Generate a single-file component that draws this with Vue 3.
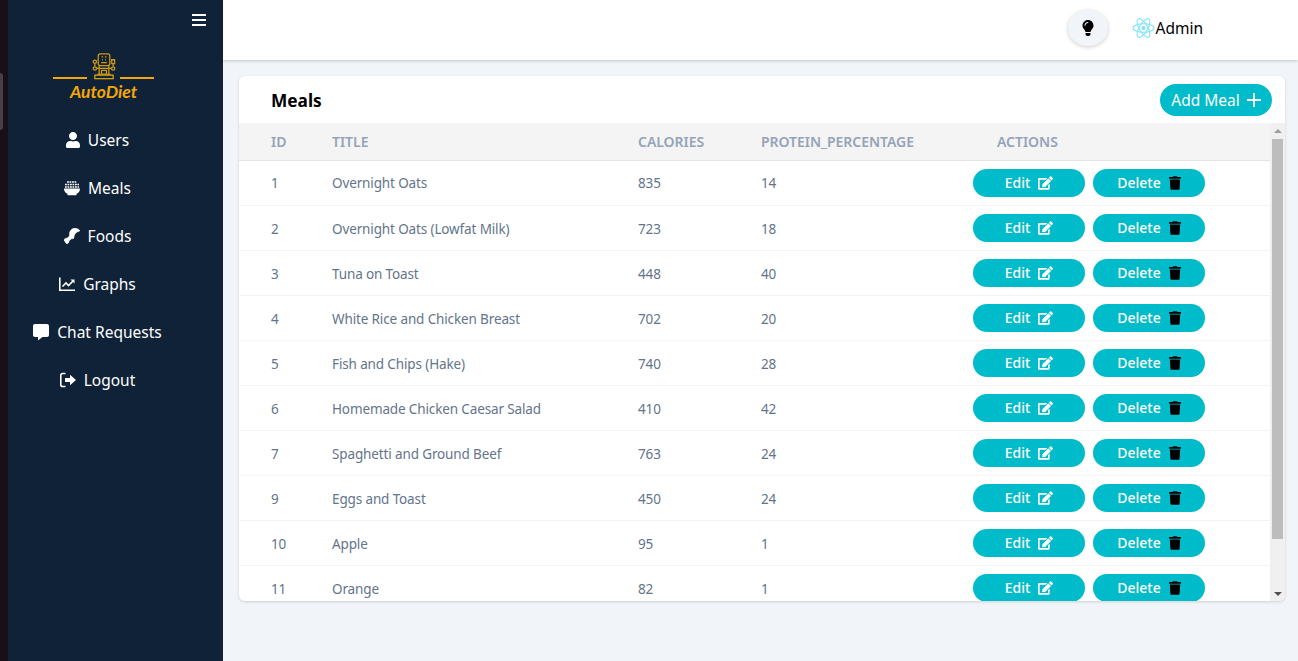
<script setup>
const nav = [
  { label: 'Users', icon: 'user' },
  { label: 'Meals', icon: 'bowl' },
  { label: 'Foods', icon: 'drum' },
  { label: 'Graphs', icon: 'chart' },
  { label: 'Chat Requests', icon: 'chat' },
  { label: 'Logout', icon: 'out' },
]
const meals = [
  [1, 'Overnight Oats', 835, 14],
  [2, 'Overnight Oats (Lowfat Milk)', 723, 18],
  [3, 'Tuna on Toast', 448, 40],
  [4, 'White Rice and Chicken Breast', 702, 20],
  [5, 'Fish and Chips (Hake)', 740, 28],
  [6, 'Homemade Chicken Caesar Salad', 410, 42],
  [7, 'Spaghetti and Ground Beef', 763, 24],
  [9, 'Eggs and Toast', 450, 24],
  [10, 'Apple', 95, 1],
  [11, 'Orange', 82, 1],
]
</script>

<template>
  <div class="page">
    <div class="edge"><div class="edge-handle"></div></div>
    <aside class="sidebar">
      <div class="burger-row">
        <button class="burger" aria-label="Menu"><span></span><span></span><span></span></button>
      </div>
      <div class="logo">
        <div class="logo-mark">
          <i class="logo-line"></i>
          <svg class="robot" viewBox="0 0 26 28" fill="none" stroke="#d09a10" stroke-width="1.300">
            <rect x="7" y="1" width="12" height="12" rx="2" />
            <path d="M10.500 4h1.500M14 4h1.500M11 7h.8M14.200 7h.8M10 10h6" stroke-width="1.500" />
            <path d="M8 13v9M18 13v9M8 16h10M10.500 22v-4h5v4" />
            <circle cx="3.500" cy="9" r="1.700" /><circle cx="3.500" cy="16" r="1.700" />
            <circle cx="22.500" cy="16" r="1.700" />
            <path d="M21 7h3v4h-3zM3.500 11v3M22.500 11v3M5 16h3M18 16h3" />
            <rect x="3.500" y="23" width="19" height="3.600" stroke-width="1.400" />
            <path d="M6 22h14" />
          </svg>
          <i class="logo-line"></i>
        </div>
        <div class="logo-text">AutoDiet</div>
      </div>
      <nav class="nav">
        <a v-for="item in nav" :key="item.label" class="nav-item">
          <svg v-if="item.icon === 'user'" class="ni" viewBox="0 0 448 512" fill="currentColor"><path d="M224 256c70.700 0 128-57.300 128-128S294.700 0 224 0 96 57.300 96 128s57.300 128 128 128zm89.600 32h-16.700c-22.200 10.200-46.900 16-72.900 16s-50.600-5.800-72.900-16h-16.700C60.200 288 0 348.200 0 422.400V464c0 26.500 21.500 48 48 48h352c26.500 0 48-21.500 48-48v-41.600c0-74.200-60.200-134.400-134.400-134.400z"/></svg>
          <svg v-else-if="item.icon === 'bowl'" class="ni wide" viewBox="0 0 16 16" fill="currentColor"><path d="M0 8.500h16c0 3-1.600 4.600-3.400 5.200v.6c0 .6-.4 1-1 1H4.400c-.6 0-1-.4-1-1v-.6C1.600 13.100 0 11.500 0 8.500z"/><path d="M3 2h10M1 4.500h14M1 7h14" fill="none" stroke="currentColor" stroke-width="1.400" stroke-dasharray="1.800 .7"/></svg>
          <svg v-else-if="item.icon === 'drum'" class="ni wide" viewBox="0 0 16 16" fill="currentColor" stroke="currentColor" stroke-width=".7" stroke-linejoin="round"><path d="M15.800 2.800C15 1 12 0 9.500.5 7 1 5.500 3.500 5.500 6.500V8L3.500 10c-.7.6-1.500.2-2.300.6C0 11.200-.2 13 1.200 13.600c0 1.400 1.800 2.900 3.100 1.400.7-.8.2-1.600.9-2.200l2-2 2.300-.3c.7-2 .6-4 2.200-5.500C12.800 3.900 14.500 3.300 15.800 2.800z"/></svg>
          <svg v-else-if="item.icon === 'chart'" class="ni wide" viewBox="0 0 16 16" fill="none" stroke="currentColor" stroke-width="1.600"><path d="M.8 1.500v12.700H16"/><path d="M3.500 10.500l3.500-3.500 2.500 2.500 4.500-4.500"/><path d="M11.500 3.500h4v4z" fill="currentColor" stroke="none"/></svg>
          <svg v-else-if="item.icon === 'chat'" class="ni wide" viewBox="0 0 512 512" fill="currentColor"><path d="M448 0H64C28.700 0 0 28.700 0 64v288c0 35.300 28.700 64 64 64h96v84c0 9.800 11.200 15.500 19.100 9.700L304 416h144c35.300 0 64-28.700 64-64V64c0-35.300-28.700-64-64-64z"/></svg>
          <svg v-else class="ni wide" viewBox="0 0 16 16" fill="currentColor"><path d="M5.500 1.500H2.600C1.600 1.500.8 2.300.8 3.300v9.400c0 1 .8 1.800 1.800 1.800h2.900" fill="none" stroke="currentColor" stroke-width="1.600"/><path d="M5 6h5V2.800L16 8l-6 5.200V10H5z"/></svg>
          <span>{{ item.label }}</span>
        </a>
      </nav>
    </aside>

    <div class="content">
      <header class="topbar">
        <button class="bulb" aria-label="Theme">
          <svg viewBox="0 0 352 512" fill="#000"><path d="M96.060 454.350c.01 6.290 1.870 12.450 5.360 17.690l17.090 25.690a31.990 31.990 0 0 0 26.640 14.280h61.710a31.990 31.990 0 0 0 26.640-14.280l17.090-25.690a31.989 31.989 0 0 0 5.360-17.690l.04-38.350H96.010l.05 38.350zM0 176c0 44.370 16.450 84.850 43.560 115.780 16.520 18.850 42.360 58.230 52.210 91.450.04.26.07.52.11.78h160.240c.04-.26.07-.51.11-.78 9.850-33.220 35.690-72.600 52.210-91.450C335.550 260.850 352 220.370 352 176 352 78.610 272.910-.3 175.450 0 73.440.31 0 82.970 0 176zm176-80c-44.110 0-80 35.890-80 80 0 8.840-7.160 16-16 16s-16-7.160-16-16c0-61.760 50.240-112 112-112 8.840 0 16 7.160 16 16s-7.160 16-16 16z"/></svg>
        </button>
        <div class="admin">
          <svg class="react" viewBox="0 0 24 22" fill="none" stroke="#61dafb" stroke-width="1.100">
            <circle cx="12" cy="11" r="2" fill="#61dafb" stroke="none" />
            <ellipse cx="12" cy="11" rx="11" ry="4.400" />
            <ellipse cx="12" cy="11" rx="11" ry="4.400" transform="rotate(60 12 11)" />
            <ellipse cx="12" cy="11" rx="11" ry="4.400" transform="rotate(120 12 11)" />
          </svg>
          <span>Admin</span>
        </div>
      </header>

      <main class="main">
        <section class="card">
          <div class="card-head">
            <h1>Meals</h1>
            <button class="add">Add Meal
              <svg viewBox="0 0 14 14" stroke="#fff" stroke-width="1.800"><path d="M7 0v14M0 7h14"/></svg>
            </button>
          </div>
          <div class="table-wrap">
            <div class="table-clip">
              <table>
                <colgroup><col class="c1"><col class="c2"><col class="c3"><col class="c4"><col></colgroup>
                <thead>
                  <tr><th>ID</th><th>TITLE</th><th>CALORIES</th><th>PROTEIN_PERCENTAGE</th><th>ACTIONS</th></tr>
                </thead>
                <tbody>
                  <tr v-for="m in meals" :key="m[0]">
                    <td>{{ m[0] }}</td><td>{{ m[1] }}</td><td>{{ m[2] }}</td><td>{{ m[3] }}</td>
                    <td class="actions">
                      <div class="btns">
                        <button class="pill">Edit
                          <svg class="pi-edit" viewBox="0 0 576 512" fill="#fff"><path d="M402.600 83.200l90.200 90.200c3.800 3.800 3.800 10 0 13.800L274.400 405.600l-92.800 10.300c-12.400 1.400-22.900-9.100-21.500-21.500l10.300-92.800L388.800 83.200c3.800-3.800 10-3.800 13.800 0zm162-22.900l-48.800-48.800c-15.200-15.200-39.900-15.200-55.200 0l-35.400 35.400c-3.800 3.800-3.800 10 0 13.800l90.200 90.200c3.800 3.800 10 3.800 13.800 0l35.400-35.400c15.200-15.300 15.200-40 0-55.200zM384 346.200V448H64V128h229.800c3.200 0 6.200-1.300 8.500-3.500l40-40c7.600-7.600 2.200-20.500-8.500-20.500H48C21.500 64 0 85.500 0 112v352c0 26.500 21.500 48 48 48h352c26.500 0 48-21.500 48-48V306.200c0-10.700-12.900-16-20.500-8.500l-40 40c-2.200 2.300-3.500 5.300-3.500 8.500z"/></svg>
                        </button>
                        <button class="pill">Delete
                          <svg class="pi-trash" viewBox="0 0 448 512" fill="#000"><path d="M432 32H312l-9.400-18.700A24 24 0 0 0 281.100 0H166.800a23.720 23.720 0 0 0-21.400 13.300L136 32H16A16 16 0 0 0 0 48v32a16 16 0 0 0 16 16h416a16 16 0 0 0 16-16V48a16 16 0 0 0-16-16zM53.200 467a48 48 0 0 0 47.900 45h245.800a48 48 0 0 0 47.900-45L416 128H32z"/></svg>
                        </button>
                      </div>
                    </td>
                  </tr>
                </tbody>
              </table>
            </div>
            <div class="scrollbar" aria-hidden="true">
              <i class="arrow up"></i>
              <div class="thumb"></div>
              <div class="rest"></div>
              <i class="arrow down"></i>
            </div>
          </div>
        </section>
      </main>
    </div>
  </div>
</template>

<style>
html, body { margin: 0; height: 100%; overflow: hidden; }
</style>

<style scoped>
.page {
  display: flex;
  width: 1298px;
  height: 661px;
  overflow: hidden;
  font-family: "Noto Sans", "Open Sans", sans-serif;
  background: #f1f5f9;
}
.edge { width: 8px; flex: none; background: #1a0f17; padding-top: 73px; box-sizing: border-box; }
.edge-handle { width: 3px; height: 57px; background: #463f43; border-radius: 0 4px 4px 0; }
.sidebar { width: 215px; flex: none; background: #0f2237; color: #fff; box-sizing: border-box; }
.burger-row { display: flex; justify-content: flex-end; padding: 14px 17px 0 0; }
.burger { display: flex; flex-direction: column; gap: 3px; padding: 0; border: 0; background: none; width: 14px; }
.burger span { display: block; height: 2px; background: #fff; }
.logo { margin: 27px 0 0 45px; width: 101px; display: flex; flex-direction: column; align-items: center; }
.logo-mark { display: flex; align-items: flex-end; width: 100%; justify-content: space-between; height: 27px; }
.logo-line { display: block; width: 34px; height: 2px; background: #f5a800; margin-bottom: 1px; }
.robot { width: 26px; height: 27px; }
.logo-text { font-family: Lato, sans-serif; font-weight: 700; font-style: italic; font-size: 17.500px; line-height: 20px; color: #f5a800; margin-top: 2px; }
.nav { display: flex; flex-direction: column; width: 179px; margin-top: 14px; }
.nav-item { height: 48px; display: flex; align-items: center; justify-content: center; gap: 8px; font-size: 15.500px; color: #fff; }
.ni { height: 16px; width: 14px; flex: none; }
.ni.wide { width: 16px; }
.content { flex: 1; min-width: 0; display: flex; flex-direction: column; }
.topbar {
  height: 60px; flex: none; background: #fff; box-shadow: 0 1px 3px rgba(0,0,0,.2);
  display: flex; align-items: center; justify-content: flex-end; padding: 0 95px 4px 0; box-sizing: border-box; position: relative;
}
.bulb {
  width: 40px; height: 36px; border-radius: 50%; border: 0; background: #f1f5f9; box-shadow: 0 1px 4px rgba(0,0,0,.2);
  display: flex; align-items: center; justify-content: center; padding: 0; margin-right: 24px;
}
.bulb svg { width: 12px; height: 16px; }
.admin { display: flex; align-items: center; font-size: 15.500px; color: #000; }
.react { width: 23px; height: 22px; opacity: .8; }
.main { padding: 16px 13px 0 16px; }
.card { height: 525px; background: #fff; border-radius: 6px; box-shadow: 0 1px 3px rgba(0,0,0,.15); overflow: hidden; display: flex; flex-direction: column; }
.card-head { height: 47px; flex: none; display: flex; align-items: center; justify-content: space-between; padding: 1px 13px 0 32px; box-sizing: border-box; }
.card-head h1 { margin: 0; font-size: 17.300px; font-weight: 700; color: #000; }
.add {
  width: 112px; height: 32px; border: 0; border-radius: 16px; background: #00bbc9; color: #fff; font: inherit; font-size: 15.500px;
  display: flex; align-items: center; justify-content: center; gap: 7px; padding: 0; margin-top: -1px;
}
.add svg { width: 14px; height: 14px; }
.table-wrap { flex: 1; min-height: 0; display: flex; }
.table-clip { flex: 1; min-width: 0; overflow: hidden; }
table { width: 100%; border-collapse: collapse; table-layout: fixed; font-size: 13.500px; letter-spacing: -.13px; color: #64748b; }
.c1 { width: 61px; } .c2 { width: 306px; } .c3 { width: 123px; } .c4 { width: 236px; }
th { height: 37px; padding: 0 0 0 32px; text-align: left; font-size: 14px; letter-spacing: -.03px; font-weight: 600; color: #94a3b8; background: #f4f4f5; border-bottom: 1px solid #e4e4e7; }
td { height: 45px; padding: 2px 0 0 32px; box-sizing: border-box; border-bottom: 1px solid #f1f5f9; }
tbody tr:first-child td { padding-top: 0; }
td.actions, tbody tr:first-child td.actions { padding: 8px 0 0 8px; vertical-align: top; }
.btns { display: flex; gap: 8px; }
.pill {
  width: 112px; height: 28px; border: 0; border-radius: 14px; background: #00bbc9; color: #fff; font: inherit; font-size: 14px; font-weight: 500; letter-spacing: 0;
  display: flex; align-items: center; justify-content: center; gap: 8px; padding: 0 0 2px;
}
.pi-edit { width: 15px; height: 14px; margin-top: 2px; }
.pi-trash { width: 12px; height: 14px; margin-top: 2px; }
.scrollbar { width: 15px; flex: none; background: #f1f0f0; display: flex; flex-direction: column; align-items: center; }
.arrow { display: block; width: 0; height: 0; flex: none; border-left: 4px solid transparent; border-right: 4px solid transparent; }
.arrow.up { border-bottom: 4px solid #9e9e9e; margin: 6px 0 6px; }
.arrow.down { border-top: 4px solid #505050; margin: 0 0 5px; }
.thumb { width: 11px; height: 400px; background: #bdbdbd; flex: none; }
.rest { flex: 1; }
</style>
